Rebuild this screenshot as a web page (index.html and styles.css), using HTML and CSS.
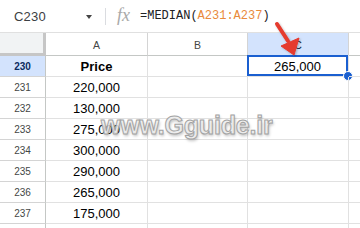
FILE: index.html
```html
<!DOCTYPE html>
<html>
<head>
<meta charset="utf-8">
<link rel="stylesheet" href="styles.css">
</head>
<body>
<div class="app">
  <div class="toolbar">
    <div class="namebox">C230</div>
    <div class="caret"></div>
    <div class="sep"></div>
    <div class="fx">fx</div>
    <div class="formula">=MEDIAN(<span class="ref">A231:A237</span>)</div>
  </div>
  <div class="grid">
    <div class="corner"></div>
    <div class="colh">A</div>
    <div class="colh">B</div>
    <div class="colh sel">C</div>
    <div class="colh last"></div>

    <div class="rowh sel">230</div>
    <div class="cell bold">Price</div>
    <div class="cell"></div>
    <div class="cell active">265,000<span class="handle"></span></div>
    <div class="cell last"></div>

    <div class="rowh">231</div><div class="cell">220,000</div><div class="cell"></div><div class="cell"></div><div class="cell last"></div>
    <div class="rowh">232</div><div class="cell">130,000</div><div class="cell"></div><div class="cell"></div><div class="cell last"></div>
    <div class="rowh">233</div><div class="cell">275,000</div><div class="cell"></div><div class="cell"></div><div class="cell last"></div>
    <div class="rowh">234</div><div class="cell">300,000</div><div class="cell"></div><div class="cell"></div><div class="cell last"></div>
    <div class="rowh">235</div><div class="cell">290,000</div><div class="cell"></div><div class="cell"></div><div class="cell last"></div>
    <div class="rowh">236</div><div class="cell">265,000</div><div class="cell"></div><div class="cell"></div><div class="cell last"></div>
    <div class="rowh">237</div><div class="cell">175,000</div><div class="cell"></div><div class="cell"></div><div class="cell last"></div>
    <div class="rowh"></div><div class="cell"></div><div class="cell"></div><div class="cell"></div><div class="cell last"></div>
  </div>
  <div class="watermark">www.Gguide.ir</div>
  <svg class="arrow" width="40" height="44" viewBox="0 0 40 44">
    <defs>
      <filter id="sh" x="-30%" y="-30%" width="160%" height="160%">
        <feDropShadow dx="1" dy="1" stdDeviation="1" flood-color="#000" flood-opacity="0.25"/>
      </filter>
    </defs>
    <g filter="url(#sh)">
      <line x1="6" y1="3" x2="17" y2="20" stroke="#e53a2f" stroke-width="4" stroke-linecap="round"/>
      <polygon points="10,25 28,17 23,34" fill="#e53a2f" stroke="#e53a2f" stroke-width="1" stroke-linejoin="round"/>
    </g>
  </svg>
</div>
</body>
</html>
```
FILE: styles.css
```css
html, body {
  margin: 0;
  padding: 0;
  overflow: hidden;
  background: #ffffff;
}
.app {
  position: relative;
  width: 360px;
  height: 228px;
  font-family: "Liberation Sans", Arial, sans-serif;
  color: #000;
}
.toolbar {
  display: flex;
  align-items: center;
  height: 32px;
  border-bottom: 1px solid #e0e0e0;
  box-sizing: content-box;
}
.namebox {
  width: 72px;
  padding-left: 14px;
  font-size: 13px;
  color: #3c4043;
  letter-spacing: 0.2px;
}
.caret {
  width: 0;
  height: 0;
  border-left: 3.5px solid transparent;
  border-right: 3.5px solid transparent;
  border-top: 4px solid #444;
  margin-top: 1px;
}
.sep {
  width: 1px;
  height: 17px;
  background: #dadce0;
  margin-left: 13px;
}
.fx {
  margin-left: 11px;
  font-family: "Liberation Serif", serif;
  font-style: italic;
  font-size: 18px;
  color: #a9a9a9;
  width: 23px;
  line-height: 18px;
  margin-top: -2px;
}
.formula {
  font-family: "Liberation Mono", monospace;
  font-size: 12px;
  color: #202124;
}
.ref {
  color: #e98a3b;
}
.grid {
  display: grid;
  grid-template-columns: 46px 102px 100px 101px 1fr;
  grid-template-rows: 23px repeat(9, 21px);
}
.grid > div {
  box-sizing: border-box;
  display: flex;
  align-items: center;
  justify-content: center;
}
.corner {
  background: #f1f3f4;
  border-right: 3px solid #c6c6c6;
  border-bottom: 3px solid #c6c6c6;
}
.colh {
  font-size: 10.5px;
  color: #444746;
  border-right: 1px solid #d4d4d4;
  border-bottom: 1px solid #c4c7c5;
  padding-top: 1px;
}
.colh.sel {
  background: #d3e3fd;
  color: #0b1f3f;
}
.rowh {
  font-size: 10px;
  color: #444746;
  border-right: 1px solid #c4c7c5;
  border-bottom: 1px solid #d4d4d4;
}
.rowh.sel {
  background: #d3e3fd;
  color: #0b2b5f;
  font-weight: bold;
}
.cell {
  position: relative;
  font-size: 13px;
  border-right: 1px solid #e1e1e1;
  border-bottom: 1px solid #e1e1e1;
  padding-top: 1px;
}
.cell.bold {
  font-weight: bold;
}
.last {
  border-right: none;
}
.cell.active {
  box-shadow: inset 0 0 0 2px #1a5fd0;
  margin-left: -1px;
  margin-top: -1px;
}
.handle {
  position: absolute;
  right: -5px;
  bottom: -5px;
  width: 8px;
  height: 8px;
  border-radius: 50%;
  background: #1a5fd0;
  border: 1px solid #fff;
}
.watermark {
  position: absolute;
  left: 101px;
  top: 113px;
  font-size: 25px;
  line-height: 25px;
  font-weight: bold;
  letter-spacing: -0.2px;
  color: rgba(240, 240, 240, 0.85);
  -webkit-text-stroke: 1px #a3a3a3;
  text-shadow: 1px 2px 3px rgba(0, 0, 0, 0.25);
}
.arrow {
  position: absolute;
  left: 271px;
  top: 21px;
}
```
